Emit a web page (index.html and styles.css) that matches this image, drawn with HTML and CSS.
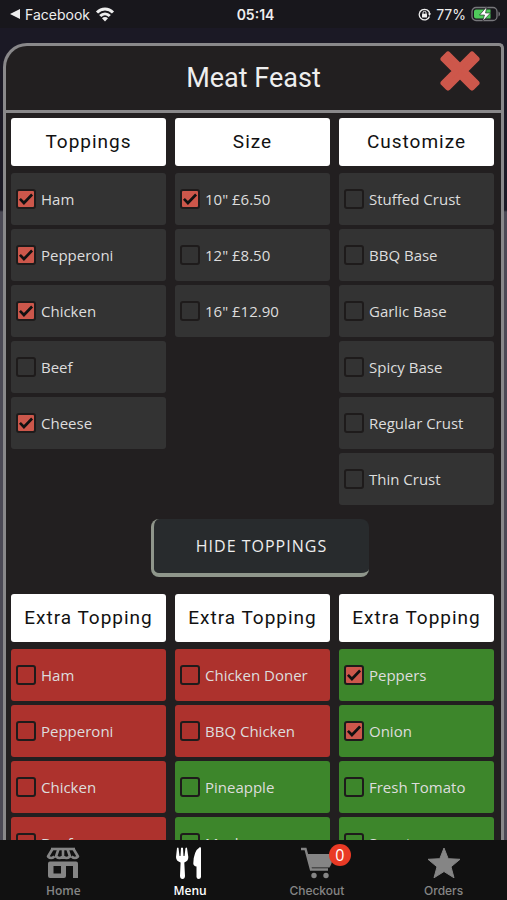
FILE: index.html
```html
<!DOCTYPE html>
<html lang="en">
<head>
  <meta charset="UTF-8" />
  <title>Meat Feast</title>
  <meta name="viewport" content="width=device-width, initial-scale=1" />
  <link rel="stylesheet" href="styles.css">
</head>
<body>

<header class="status-bar">
  <div class="status-left">
    <svg width="10" height="10" viewBox="0 0 10 10"><path d="M0 5 10 0v10z" fill="currentColor"/></svg>
    <span>Facebook</span>
    <svg width="20" height="16" viewBox="0 0 20 16" fill="none" stroke="currentColor" stroke-width="3">
      <path d="M2 6.500c4.600-4.700 11.400-4.700 16 0M5.200 10c2.800-2.800 6.800-2.800 9.600 0"/>
      <path d="M7 12.200c1.700-1.600 4.300-1.600 6 0L10 15.500z" fill="currentColor" stroke="none"/>
    </svg>
  </div>
  <div class="status-time">05:14</div>
  <div class="status-right">
    <svg width="13" height="13" viewBox="0 0 13 13" fill="none" stroke="currentColor">
      <path d="M11.500 8.500A5.300 5.300 0 1 1 11.800 6" stroke-width="1.300"/>
      <path d="M10 5.500h3l-1.500 2.500z" fill="currentColor" stroke="none"/>
      <rect x="4" y="5.800" width="5" height="3.700" rx=".5" fill="currentColor" stroke="none"/>
      <path d="M5 6V4.800a1.500 1.500 0 0 1 3 0V6"/>
    </svg>
    <span>77%</span>
    <svg width="30" height="16" viewBox="0 0 30 16">
      <rect x="1" y="1.500" width="25" height="13" rx="4" fill="none" stroke="#77777b" stroke-width="1.300"/>
      <path d="M5 3.500h14.500v9H5a2 2 0 0 1-2-2v-5a2 2 0 0 1 2-2z" fill="#4fcb5b"/>
      <path d="M27.500 5.500c2 .8 2 4.200 0 5z" fill="#77777b"/>
      <path d="M16 .5 8.500 9h5L11.500 15.500l8-8.500h-5z" fill="#fff" stroke="#19181d" stroke-width=".6"/>
    </svg>
  </div>
</header>

<main>
  <div class="modal">
    <div class="modal-header">
      <h1>Meat Feast</h1>
      <button class="close-btn" aria-label="Close">
        <svg width="42" height="42" viewBox="0 0 42 42"><path d="M9 4.500 21 16.500 33 4.500 37.500 9 25.500 21 37.500 33 33 37.500 21 25.500 9 37.500 4.500 33 16.500 21 4.500 9z" fill="#cd574b" stroke="#cd574b" stroke-width="6" stroke-linejoin="round"/></svg>
      </button>
    </div>

    <div class="modal-content">
      <div class="columns">
        <section class="column">
          <h2>Toppings</h2>
          <label class="option"><input type="checkbox" checked>Ham</label>
          <label class="option"><input type="checkbox" checked>Pepperoni</label>
          <label class="option"><input type="checkbox" checked>Chicken</label>
          <label class="option"><input type="checkbox">Beef</label>
          <label class="option"><input type="checkbox" checked>Cheese</label>
        </section>
        <section class="column">
          <h2>Size</h2>
          <label class="option"><input type="checkbox" checked>10" £6.50</label>
          <label class="option"><input type="checkbox">12" £8.50</label>
          <label class="option"><input type="checkbox">16" £12.90</label>
        </section>
        <section class="column">
          <h2>Customize</h2>
          <label class="option"><input type="checkbox">Stuffed Crust</label>
          <label class="option"><input type="checkbox">BBQ Base</label>
          <label class="option"><input type="checkbox">Garlic Base</label>
          <label class="option"><input type="checkbox">Spicy Base</label>
          <label class="option"><input type="checkbox">Regular Crust</label>
          <label class="option"><input type="checkbox">Thin Crust</label>
        </section>
      </div>

      <div class="toggle-row">
        <button class="toggle-btn">HIDE TOPPINGS</button>
      </div>

      <div class="columns">
        <section class="column">
          <h2>Extra Topping</h2>
          <label class="option meat"><input type="checkbox">Ham</label>
          <label class="option meat"><input type="checkbox">Pepperoni</label>
          <label class="option meat"><input type="checkbox">Chicken</label>
          <label class="option meat"><input type="checkbox">Beef</label>
        </section>
        <section class="column">
          <h2>Extra Topping</h2>
          <label class="option meat"><input type="checkbox">Chicken Doner</label>
          <label class="option meat"><input type="checkbox">BBQ Chicken</label>
          <label class="option veg"><input type="checkbox">Pineapple</label>
          <label class="option veg"><input type="checkbox">Mushroom</label>
        </section>
        <section class="column">
          <h2>Extra Topping</h2>
          <label class="option veg"><input type="checkbox" checked>Peppers</label>
          <label class="option veg"><input type="checkbox" checked>Onion</label>
          <label class="option veg"><input type="checkbox">Fresh Tomato</label>
          <label class="option veg"><input type="checkbox">Sweetcorn</label>
        </section>
      </div>
    </div>
  </div>
</main>

<nav class="tab-bar">
  <a href="#home">
    <svg width="36" height="32" viewBox="0 0 36 32" fill="none" stroke="currentColor">
      <path d="M6 2h24" stroke-width="2.600"/>
      <path d="M7.500 2 3 9.500Q6 12.500 9.500 9.500M13.500 2 11 9.500q3.500 3 7 0M22.500 2 25 9.500q-3.500 3-7 0V2M28.500 2 33 9.500q-3 3-6.500 0" stroke-width="2.600" stroke-linejoin="round"/>
      <path d="M5 14.500h26q2 0 2 2V31h-5V19h-7v10q0 2-2 2H5q-2 0-2-2V16.500q0-2 2-2zM8.500 19v7.500H16V19z" fill="currentColor" fill-rule="evenodd" stroke="none"/>
    </svg>
    <span>Home</span>
  </a>
  <a href="#menu" class="active">
    <svg width="36" height="32" viewBox="0 0 36 32" fill="currentColor">
      <path d="M5 1q1-1 1.500 0l1 8h1l.5-8q1-1 2 0l.5 8h1l1-8q1-1 1.500 0l1.300 9q.2 4-4 5.500L13 29q-.2 3-2.500 3T8 29l.6-13.500Q4 14 4 10z"/>
      <path d="M28 0q1 0 1 1.500V30q-.3 2-2.300 2T24.500 30V19.500q-3-.3-3.200-3Q21.500 4 28 0z"/>
    </svg>
    <span>Menu</span>
  </a>
  <a href="#checkout" class="wide">
    <svg width="36" height="32" viewBox="0 0 36 32" fill="currentColor">
      <path d="M2 2h4.500L12 22.500h17" fill="none" stroke="currentColor" stroke-width="2.400"/>
      <path d="M8 7h26q0 8-3.500 13.500H12z"/>
      <circle cx="15" cy="28.500" r="2.700"/><circle cx="27" cy="28.500" r="2.700"/>
    </svg>
    <b class="badge">0</b>
    <span>Checkout</span>
  </a>
  <a href="#orders" class="wide">
    <svg width="36" height="32" viewBox="0 0 36 32"><path d="m18 1 4.200 10.700 11.800.6-9 7.500 3 11L18 24.500 8 30.800l3-11-9-7.500 11.800-.6z" fill="currentColor" stroke="currentColor" stroke-linejoin="round"/></svg>
    <span>Orders</span>
  </a>
</nav>

</body>
</html>
```
FILE: styles.css
```css
* {
  box-sizing: border-box;
}
body {
  margin: 0;
  height: 100vh;
  display: flex;
  flex-direction: column;
  overflow: hidden;
  font-family: 'Open Sans', 'Noto Sans', sans-serif;
  color: #ddd;
  background: linear-gradient(#1b1925 210px, #4b4955 212px);
}

/* Status bar */
.status-bar {
  display: grid;
  grid-template-columns: 1fr auto 1fr;
  align-items: center;
  height: 28px;
  padding: 0 6px 0 10px;
  background: #18171c;
  color: #eee;
  font-family: Inter, sans-serif;
  font-size: 14px;
}
.status-left,
.status-right {
  display: flex;
  align-items: center;
  gap: 5px;
}
.status-right {
  justify-content: flex-end;
}
.status-time {
  font-weight: 600;
}

/* Modal */
main {
  flex: 1;
  min-height: 0;
  overflow: hidden;
  padding: 15px 3px 0;
}
.modal {
  border: 3px solid #89888a;
  border-bottom: 0;
  border-radius: 24px 5px 0 0;
  background: #221f20;
}
.modal-header {
  position: relative;
  height: 67px;
  display: flex;
  align-items: center;
  justify-content: center;
  border-bottom: 3px solid #89888a;
}
.modal-header h1 {
  margin: 0;
  font-family: Roboto, sans-serif;
  font-size: 27px;
  font-weight: 400;
  color: #eee;
}
.close-btn {
  position: absolute;
  top: 4px;
  right: 20px;
  padding: 0;
  border: 0;
  background: none;
  cursor: pointer;
}
.close-btn svg {
  display: block;
}
.modal-content {
  padding: 5px 7px 5px 5px;
}
.columns {
  display: grid;
  grid-template-columns: repeat(3, 1fr);
  gap: 9px;
  align-items: start;
}
.column {
  display: flex;
  flex-direction: column;
  gap: 4px;
}
.column h2 {
  margin: 0 0 3px;
  height: 48px;
  border-radius: 3px;
  background: #fff;
  color: #111;
  font-family: Roboto, sans-serif;
  font-size: 19px;
  font-weight: 400;
  letter-spacing: 1px;
  line-height: 47px;
  text-align: center;
  white-space: nowrap;
}
.option {
  display: flex;
  align-items: center;
  gap: 5px;
  height: 52px;
  padding-left: 5px;
  border-radius: 3px;
  background: #333;
  font-size: 15px;
  white-space: nowrap;
}
.meat {
  background: #ad322d;
}
.veg {
  background: #3d862b;
}
.option input {
  appearance: none;
  flex: none;
  width: 20px;
  height: 20px;
  margin: 0;
  border: 2px solid #1e1b1b;
  border-radius: 3px;
}
.option input:checked {
  background: #cc574b;
}
.option input:checked::before {
  content: "";
  display: block;
  width: 16px;
  height: 16px;
  background: #111;
  clip-path: polygon(6% 54%, 18% 43%, 37% 63%, 82% 16%, 94% 28%, 37% 87%);
}
.toggle-row {
  display: flex;
  justify-content: center;
  padding: 14px 0 17px 15px;
}
.toggle-btn {
  width: 218px;
  height: 58px;
  padding: 0;
  border: solid #8f968b;
  border-width: 0 0 4px 3px;
  border-radius: 8px;
  background: #282b2d;
  color: #eee;
  font-family: 'Open Sans', sans-serif;
  font-size: 16px;
  font-weight: 500;
  letter-spacing: 1px;
  cursor: pointer;
}

/* Bottom tabs */
.tab-bar {
  display: grid;
  grid-template-columns: repeat(4, 1fr);
  height: 60px;
  background: #111;
}
.tab-bar a {
  position: relative;
  display: flex;
  flex-direction: column;
  align-items: center;
  gap: 4px;
  padding-top: 7px;
  color: #858585;
  font-size: 12px;
  font-weight: 600;
  line-height: 16px;
  text-decoration: none;
}
.tab-bar .active {
  color: #fff;
}
.tab-bar .wide {
  font-family: Inter, sans-serif;
  font-weight: 500;
}
.badge {
  position: absolute;
  top: 4px;
  left: calc(50% + 12px);
  width: 22px;
  height: 22px;
  border-radius: 50%;
  background: #e93a25;
  color: #fff;
  font-family: 'Open Sans', sans-serif;
  font-size: 16px;
  font-weight: 400;
  line-height: 22px;
  text-align: center;
}
```
